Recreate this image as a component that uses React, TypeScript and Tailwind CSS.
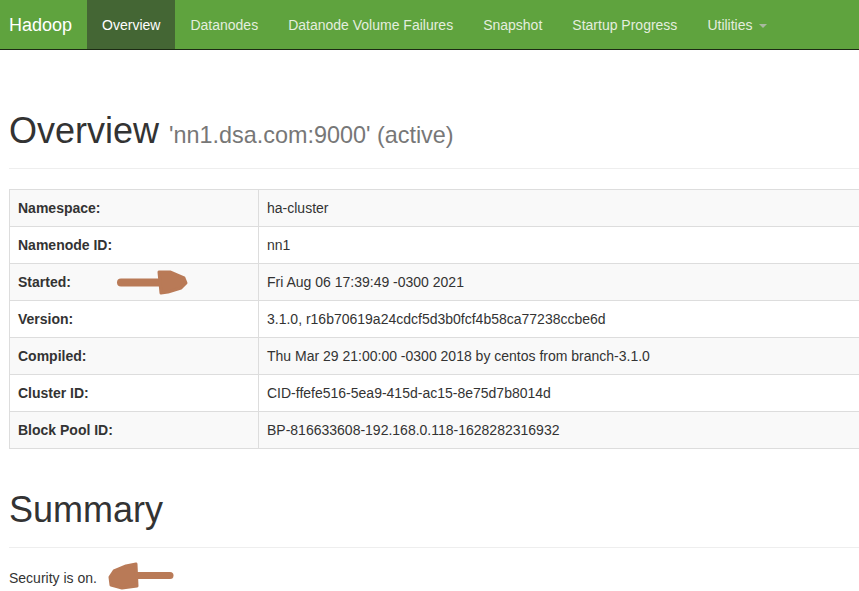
import React from 'react';

const info: [string, string][] = [
  ['Namespace:', 'ha-cluster'],
  ['Namenode ID:', 'nn1'],
  ['Started:', 'Fri Aug 06 17:39:49 -0300 2021'],
  ['Version:', '3.1.0, r16b70619a24cdcf5d3b0fcf4b58ca77238ccbe6d'],
  ['Compiled:', 'Thu Mar 29 21:00:00 -0300 2018 by centos from branch-3.1.0'],
  ['Cluster ID:', 'CID-ffefe516-5ea9-415d-ac15-8e75d7b8014d'],
  ['Block Pool ID:', 'BP-816633608-192.168.0.118-1628282316932'],
];

const navItems = ['Datanodes', 'Datanode Volume Failures', 'Snapshot', 'Startup Progress'];

export default function App() {
  return (
    <div className="relative w-full min-h-[591px] overflow-hidden bg-white font-['Liberation_Sans',Arial,sans-serif] text-[14px] leading-[20px] text-[#333]">
      {/* navbar */}
      <nav className="h-[50px] w-full bg-[#5fa33e] border-b border-[#1c2a14]">
        <div className="flex h-[49px] items-stretch pl-[9px]">
          <a className="flex items-center pr-[15px] text-[18px] text-white">Hadoop</a>
          <a className="flex items-center bg-[#446634] px-[15px] text-white">Overview</a>
          {navItems.map((item) => (
            <a key={item} className="flex items-center px-[15px] text-[#e4eedf]">
              {item}
            </a>
          ))}
          <a className="flex items-center px-[15px] text-[#e4eedf]">
            Utilities
            <span className="ml-[6px] mt-[2px] inline-block h-0 w-0 border-x-[4px] border-t-[4px] border-x-transparent border-t-[#a9b9a0]" />
          </a>
        </div>
      </nav>

      <div className="w-[1100px] pl-[9px]">
        <div className="mt-[61px] mb-[20px] border-b border-[#eee] pb-[13px]">
          <h1 className="text-[36px] leading-[40px] font-normal text-[#333]">
            Overview{' '}
            <small className="text-[23.4px] text-[#777]">'nn1.dsa.com:9000' (active)</small>
          </h1>
        </div>

        <table className="w-full border-collapse border border-[#ddd]">
          <tbody>
            {info.map(([label, value], i) => (
              <tr key={label} className={i % 2 === 0 ? 'bg-[#f9f9f9]' : 'bg-white'}>
                <th className="w-[249px] border border-[#ddd] p-[8px] text-left font-bold leading-[20px]">
                  {label}
                </th>
                <td className="border border-[#ddd] p-[8px] leading-[20px]">{value}</td>
              </tr>
            ))}
          </tbody>
        </table>

        <div className="mt-[41px] mb-[20px] border-b border-[#eee] pb-[17px]">
          <h1 className="text-[36px] leading-[40px] font-normal text-[#333]">Summary</h1>
        </div>
        <p>Security is on.</p>
      </div>

      {/* hand drawn arrows */}
      <svg className="pointer-events-none absolute left-0 top-0" width="859" height="591">
        <g fill="#b97a57" stroke="#b97a57" strokeLinejoin="round" strokeLinecap="round">
          <line x1="121" y1="282.5" x2="162" y2="282.5" strokeWidth="8" />
          <path d="M159 272 L170 272 L184 278 L186 283 L181 288 L168 292 L161 293 Z" strokeWidth="3" />
          <line x1="134" y1="575.5" x2="170" y2="575.5" strokeWidth="7" />
          <path d="M136 564 L137 586 L122 588 L111 585 L110 577 L114 571 L126 566 Z" strokeWidth="3" />
        </g>
      </svg>
    </div>
  );
}
